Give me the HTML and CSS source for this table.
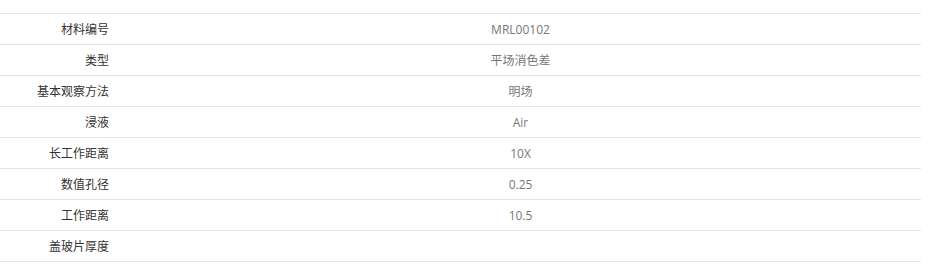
FILE: index.html
```html
<!DOCTYPE html>
<html lang="zh">
<head>
<meta charset="utf-8">
<link rel="stylesheet" href="styles.css">
</head>
<body>
<div class="spec">
  <div class="row"><div class="label">材料编号</div><div class="value">MRL00102</div></div>
  <div class="row"><div class="label">类型</div><div class="value">平场消色差</div></div>
  <div class="row"><div class="label">基本观察方法</div><div class="value">明场</div></div>
  <div class="row"><div class="label">浸液</div><div class="value">Air</div></div>
  <div class="row"><div class="label">长工作距离</div><div class="value">10X</div></div>
  <div class="row"><div class="label">数值孔径</div><div class="value">0.25</div></div>
  <div class="row"><div class="label">工作距离</div><div class="value">10.5</div></div>
  <div class="row"><div class="label">盖玻片厚度</div><div class="value"></div></div>
</div>
</body>
</html>
```
FILE: styles.css
```css
html, body {
  margin: 0;
  padding: 0;
  background: #fff;
}
body {
  padding-top: 13px;
  font-family: "Open Sans", "Noto Sans CJK SC", sans-serif;
  font-size: 12px;
}
.spec {
  width: 921px;
  border-bottom: 1px solid #e5e5e5;
}
.row {
  display: grid;
  grid-template-columns: 120px 1fr;
  height: 30px;
  border-top: 1px solid #e5e5e5;
  align-items: center;
}
.label {
  text-align: right;
  padding-right: 11px;
  color: #333;
}
.value {
  text-align: center;
  color: #777;
}
```
